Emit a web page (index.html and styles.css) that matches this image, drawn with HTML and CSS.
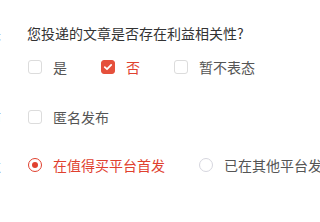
FILE: index.html
```html
<!DOCTYPE html>
<html lang="zh-CN">
<head>
    <meta charset="UTF-8">
    <meta name="viewport" content="width=device-width, initial-scale=1.0">
    <title>投稿设置</title>
    <link rel="stylesheet" href="styles.css">
</head>
<body>
    <div class="form">
        <div class="form-row row-interest">
            <label class="form-label">利益相关</label>
            <div class="form-body">
                <p class="question">您投递的文章是否存在利益相关性?</p>
                <div class="options">
                    <span class="option">
                        <span class="check"></span>
                        <span class="option-text">是</span>
                    </span>
                    <span class="option is-checked">
                        <span class="check">
                            <svg viewBox="0 0 14 14" width="14" height="14"><path d="M3.8 7.2 L6 9.2 L10.2 4.9" fill="none" stroke="#fff" stroke-width="1.8" stroke-linecap="round" stroke-linejoin="round"/></svg>
                        </span>
                        <span class="option-text">否</span>
                    </span>
                    <span class="option">
                        <span class="check"></span>
                        <span class="option-text">暂不表态</span>
                    </span>
                </div>
            </div>
        </div>

        <div class="form-row row-anon">
            <label class="form-label">匿名发布</label>
            <div class="form-body">
                <div class="options">
                    <span class="option">
                        <span class="check"></span>
                        <span class="option-text">匿名发布</span>
                    </span>
                </div>
            </div>
        </div>

        <div class="form-row row-first">
            <label class="form-label">是否首发</label>
            <div class="form-body">
                <div class="options">
                    <span class="option is-checked">
                        <span class="radio"></span>
                        <span class="option-text">在值得买平台首发</span>
                    </span>
                    <span class="option">
                        <span class="radio"></span>
                        <span class="option-text">已在其他平台发</span>
                    </span>
                </div>
            </div>
        </div>
    </div>
</body>
</html>
```

FILE: styles.css
```css
body {
    margin: 0;
    background: #fff;
    font-family: "Noto Sans CJK SC", "Noto Sans", sans-serif;
    font-size: 14px;
    color: #333;
    overflow: hidden;
}
.form {
    padding-top: 23px;
}
.form-row {
    display: flex;
    align-items: flex-start;
}
.form-label {
    flex: none;
    width: 80px;
    margin-left: -79px;
    margin-right: 26px;
    text-align: right;
    line-height: 20px;
    color: #666;
    white-space: nowrap;
}
.form-body {
    flex: 1;
    min-width: 0;
}
.question {
    margin: 0 0 14px;
    line-height: 20px;
    color: #333;
}
.row-anon {
    margin-top: 30px;
}
.row-first {
    margin-top: 28px;
}
.options {
    display: flex;
    gap: 34px;
    padding-left: 1px;
    white-space: nowrap;
}
.option {
    display: flex;
    align-items: center;
    gap: 11px;
    line-height: 20px;
    color: #555;
}
.check, .radio {
    flex: none;
    box-sizing: border-box;
    width: 14px;
    height: 14px;
    border: 1px solid #dcdcdc;
    background: #fff;
}
.check {
    border-radius: 3px;
}
.check svg {
    display: block;
    margin: -1px;
}
.radio {
    border-radius: 50%;
    border-color: #d6d6de;
}
.is-checked .option-text {
    color: #e0412f;
}
.is-checked .check {
    background: #e5503c;
    border-color: #e5503c;
}
.is-checked .radio {
    border: 1.5px solid #e0412f;
    display: flex;
    align-items: center;
    justify-content: center;
}
.is-checked .radio::after {
    content: "";
    width: 6px;
    height: 6px;
    border-radius: 50%;
    background: #e0412f;
}
```
